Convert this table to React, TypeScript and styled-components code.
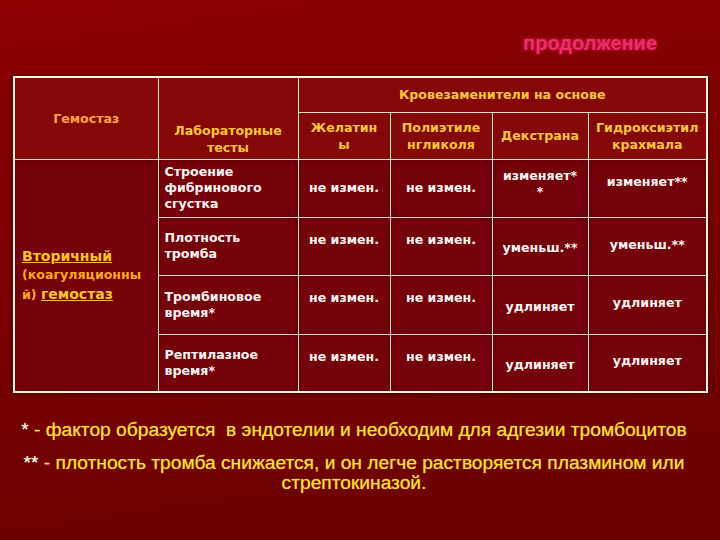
import styled, { createGlobalStyle } from "styled-components";

const GlobalStyle = createGlobalStyle`
  html, body {
    margin: 0;
    padding: 0;
  }
  body {
    background: #6c0000;
  }
`;

// Slide background
const Slide = styled.div`
  width: 720px;
  height: 540px;
  overflow: hidden;
  box-sizing: border-box;
  padding: 31px 0 0 13px;
  background: linear-gradient(172deg, #8c0000 0%, #820000 30%, #740000 65%, #6a0000 100%);
  font-family: "DejaVu Sans", Verdana, sans-serif;
`;

const TitleRow = styled.div`
  display: flex;
  justify-content: flex-end;
  padding-right: 63px;
  height: 24px;
  margin-bottom: 21px;
`;

const Title = styled.div`
  font-family: "Liberation Sans", Arial, sans-serif;
  font-weight: bold;
  font-size: 20px;
  line-height: 24px;
  color: #ec2f6c;
  text-shadow: 0 0 4px rgba(255, 40, 110, 0.7);
`;

const Table = styled.table`
  width: 693px;
  table-layout: fixed;
  border-collapse: collapse;
  border: 2px solid #fbf1e2;
  box-shadow: 0 0 5px 1px rgba(40, 0, 0, 0.55);
  font-size: 12.6px;
  font-weight: bold;
`;

const Row = styled.tr<{ $h: number }>`
  height: ${(p) => p.$h}px;
`;

const HeadCell = styled.td<{ $tone?: string; $valign?: string; $pad?: string }>`
  border: 1px solid #f2dccc;
  background: #840808;
  color: ${(p) => p.$tone ?? "#ffc63a"};
  text-align: center;
  vertical-align: ${(p) => p.$valign ?? "middle"};
  padding: ${(p) => p.$pad ?? "0 2px"};
  line-height: 17px;
`;

const Cell = styled.td<{ $align?: string; $valign?: string; $pad?: string }>`
  border: 1px solid #f2dccc;
  background: #74000a;
  color: #fff6f2;
  text-align: ${(p) => p.$align ?? "center"};
  vertical-align: ${(p) => p.$valign ?? "middle"};
  padding: ${(p) => p.$pad ?? "0 4px"};
  line-height: 16px;
  box-shadow: inset 0 0 3px rgba(60, 0, 0, 0.6);
`;

const GroupCell = styled(Cell)`
  color: #ffaa22;
  line-height: 18.5px;
`;

const Accent = styled.span`
  font-size: 14px;
  color: #ffc52e;
  text-decoration: underline;
`;

const Notes = styled.div`
  width: 700px;
  margin: 27px 0 0 -9px;
  font-family: "Liberation Sans", Arial, sans-serif;
  font-size: 19.2px;
  color: #ffe23a;
  text-align: center;
  text-shadow: 0 0 1px rgba(255, 226, 58, 0.6);
`;

const Note = styled.p`
  margin: 0 0 13px;
  line-height: 20px;
  white-space: pre-wrap;
`;

const Star = styled.span`
  color: #ffffff;
`;

const body = [
  { test: ["Плотность", "тромба"], cells: ["не измен.", "не измен.", "уменьш.**", "уменьш.**"], h: 58 },
  { test: ["Тромбиновое", "время*"], cells: ["не измен.", "не измен.", "удлиняет", "удлиняет"], h: 59 },
  { test: ["Рептилазное", "время*"], cells: ["не измен.", "не измен.", "удлиняет", "удлиняет"], h: 58 },
];

function App() {
  return (
    <>
      <GlobalStyle />
      <Slide>
        <TitleRow>
          <Title>продолжение</Title>
        </TitleRow>

        <Table>
          <colgroup>
            <col style={{ width: 144 }} />
            <col style={{ width: 140 }} />
            <col style={{ width: 92 }} />
            <col style={{ width: 102 }} />
            <col style={{ width: 96 }} />
            <col style={{ width: 119 }} />
          </colgroup>
          <tbody>
            <Row $h={35}>
              <HeadCell rowSpan={2} $tone="#ffa53a" $pad="0 2px 0 2px">
                Гемостаз
              </HeadCell>
              <HeadCell rowSpan={2} $valign="bottom" $pad="0 2px 3px">
                Лабораторные
                <br />
                тесты
              </HeadCell>
              <HeadCell colSpan={4}>Кровезаменители на основе</HeadCell>
            </Row>
            <Row $h={47}>
              <HeadCell>
                Желатин
                <br />ы
              </HeadCell>
              <HeadCell>
                Полиэтиле
                <br />
                нгликоля
              </HeadCell>
              <HeadCell>Декстрана</HeadCell>
              <HeadCell>
                Гидроксиэтил
                <br />
                крахмала
              </HeadCell>
            </Row>
            <Row $h={58}>
              <GroupCell rowSpan={4} $align="left" $pad="0 4px 0 7px">
                <Accent>Вторичный</Accent>
                <br />
                (коагуляционны
                <br />
                й) <Accent>гемостаз</Accent>
              </GroupCell>
              <Cell $align="left" $pad="0 4px 0 6px">
                Строение
                <br />
                фибринового
                <br />
                сгустка
              </Cell>
              <Cell>не измен.</Cell>
              <Cell>не измен.</Cell>
              <Cell $valign="top" $pad="8px 4px 0">
                изменяет*
                <br />*
              </Cell>
              <Cell $valign="top" $pad="14px 4px 0">
                изменяет**
              </Cell>
            </Row>
            {body.map((r) => (
              <Row $h={r.h} key={r.test[0]}>
                <Cell $align="left" $pad="0 4px 0 6px">
                  {r.test[0]}
                  <br />
                  {r.test[1]}
                </Cell>
                <Cell $valign="top" $pad="14px 4px 0">
                  {r.cells[0]}
                </Cell>
                <Cell $valign="top" $pad="14px 4px 0">
                  {r.cells[1]}
                </Cell>
                <Cell $pad="4px 4px 0">{r.cells[2]}</Cell>
                <Cell $pad="0 4px 3px">{r.cells[3]}</Cell>
              </Row>
            ))}
          </tbody>
        </Table>

        <Notes>
          <Note>
            <Star>*</Star> - фактор образуется  в эндотелии и необходим для адгезии тромбоцитов
          </Note>
          <Note>
            <Star>**</Star> - плотность тромба снижается, и он легче растворяется плазмином или
            <br />
            стрептокиназой.
          </Note>
        </Notes>
      </Slide>
    </>
  );
}

export default App;
